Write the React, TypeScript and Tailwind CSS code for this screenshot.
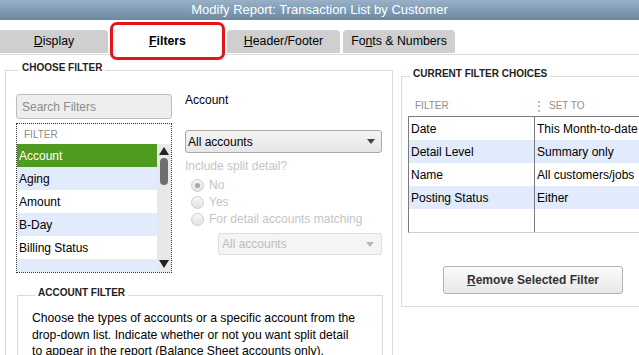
import React from 'react';

const filters = ['Account', 'Aging', 'Amount', 'B-Day', 'Billing Status'];

const choices = [
  { name: 'Date', value: 'This Month-to-date' },
  { name: 'Detail Level', value: 'Summary only' },
  { name: 'Name', value: 'All customers/jobs' },
  { name: 'Posting Status', value: 'Either' },
];

function Caret({ color }: { color: string }) {
  return (
    <svg width="8" height="5" viewBox="0 0 8 5">
      <path d="M0 0h8L4 5z" fill={color} />
    </svg>
  );
}

function Radio({ checked, label }: { checked?: boolean; label: string }) {
  return (
    <div className="flex items-center h-[17px] pl-[6px]">
      <span className="w-[13px] h-[13px] rounded-full border border-[#cdcdcd] bg-linear-to-b from-[#f7f7f7] to-[#e2e2e2] flex items-center justify-center">
        {checked && <span className="w-[5px] h-[5px] rounded-full bg-[#a8a8a8]" />}
      </span>
      <span className="ml-[5px] text-[12px] leading-[15px] text-[#c4c4c4]">{label}</span>
    </div>
  );
}

export default function App() {
  return (
    <div className="w-[639px] h-[355px] overflow-hidden bg-white font-['Liberation_Sans',Arial,sans-serif] text-black">
      {/* Title bar */}
      <div className="h-[20px] bg-linear-to-b from-[#98b1c7] to-[#6b88a2] flex items-center justify-center">
        <span className="text-white text-[13px] leading-[20px] font-['Liberation_Sans_Narrow','Arial_Narrow',sans-serif]">
          Modify Report: Transaction List by Customer
        </span>
      </div>

      {/* Tabs */}
      <div className="flex items-start h-[35px] border-b border-[#dadada] text-[12.3px]">
        <div className="mt-[10px] w-[108px] h-[23px] bg-[#cfcfcf] rounded-tr-[4px] flex items-center justify-center">
          <span><u>D</u>isplay</span>
        </div>
        <div className="relative z-10 ml-[2px] mt-[2px] w-[115px] h-[38px] border-[3px] border-[#e5141b] rounded-[7px] bg-white flex items-center justify-center">
          <span className="font-bold"><u>F</u>ilters</span>
        </div>
        <div className="ml-[2px] mt-[10px] w-[113px] h-[23px] bg-[#cfcfcf] rounded-t-[4px] flex items-center justify-center">
          <span><u>H</u>eader/Footer</span>
        </div>
        <div className="ml-[3px] mt-[10px] w-[112px] h-[23px] bg-[#cfcfcf] rounded-t-[4px] flex items-center justify-center">
          <span>Fo<u>n</u>ts &amp; Numbers</span>
        </div>
      </div>

      <div className="flex items-start">
        {/* Choose filter */}
        <fieldset className="ml-[5px] mt-[8px] w-[388px] h-[330px] shrink-0 border border-[#dcdcdc] pl-[10px]">
          <legend className="ml-[3px] px-[3px] text-[10px] leading-[10px] pb-[5px] font-bold text-[#222]">CHOOSE FILTER</legend>
          <div className="flex mt-[16px]">
            <div className="w-[156px]">
              <div className="h-[25px] rounded-[3px] border border-[#bdbdbd] bg-[#eeeeee] flex items-center pl-[5px] text-[12px] text-[#8c8c8c]">
                Search Filters
              </div>
              <div className="mt-[4px] h-[150px] border border-dotted border-[#333] overflow-hidden">
                <div className="h-[20px] flex items-center pl-[7px] text-[10px] text-[#8e8e8e]">FILTER</div>
                <div className="flex">
                  <div className="flex-1">
                    {filters.map((f, i) => (
                      <div
                        key={f}
                        className={`h-[23px] flex items-center pl-[2px] text-[12px] ${
                          i === 0 ? 'bg-[#4f9a1f] text-white' : i % 2 === 1 ? 'bg-[#e1ebfb]' : 'bg-white'
                        }`}
                      >
                        {f}
                      </div>
                    ))}
                    <div className="h-[23px] bg-[#e1ebfb]" />
                  </div>
                  <div className="w-[14px] h-[128px] bg-[#e8e8e8] flex flex-col items-center">
                    <svg width="10" height="8" viewBox="0 0 10 8" className="mt-[3px]">
                      <path d="M0 8L5 0L10 8z" fill="#222" />
                    </svg>
                    <div className="mt-[3px] w-[8px] h-[27px] rounded-[4px] bg-[#6f6f6f]" />
                    <div className="flex-1" />
                    <svg width="10" height="8" viewBox="0 0 10 8" className="mb-[4px]">
                      <path d="M0 0L5 8L10 0z" fill="#222" />
                    </svg>
                  </div>
                </div>
              </div>
            </div>

            <div className="ml-[13px] w-[197px]">
              <div className="text-[12px] leading-[15px] -mt-[1px]">Account</div>
              <div className="mt-[22px] h-[23px] rounded-[3px] border border-[#a9a9a9] bg-linear-to-b from-[#f4f4f4] to-[#e6e6e6] flex items-center justify-between pl-[2px] pr-[6px] text-[12px]">
                <span>All accounts</span>
                <Caret color="#444" />
              </div>
              <div className="mt-[6px] text-[12px] leading-[15px] text-[#c4c4c4]">Include split detail?</div>
              <div className="mt-[3px]">
                <Radio checked label="No" />
                <Radio label="Yes" />
                <Radio label="For detail accounts matching" />
              </div>
              <div className="mt-[5px] ml-[33px] h-[22px] rounded-[3px] border border-[#dedede] bg-[#f5f5f5] flex items-center justify-between pl-[3px] pr-[7px] text-[12px] text-[#bcbcbc]">
                <span>All accounts</span>
                <Caret color="#b8b8b8" />
              </div>
            </div>
          </div>

          {/* Account filter */}
          <fieldset className="mt-[15px] ml-[1px] w-[366px] h-[90px] border border-[#dcdcdc] pl-[14px]">
            <legend className="ml-[3px] px-[3px] text-[10px] leading-[10px] pb-[5px] font-bold text-[#222]">ACCOUNT FILTER</legend>
            <p className="mt-[7px] text-[12.2px] leading-[16.5px] w-[328px]">
              Choose the types of accounts or a specific account from the drop-down list. Indicate whether or not you want split detail to appear in the report (Balance Sheet accounts only).
            </p>
          </fieldset>
        </fieldset>

        {/* Current filter choices */}
        <fieldset className="ml-[8px] mt-[14px] w-[260px] h-[238px] shrink-0 border border-[#dcdcdc] pl-[6px]">
          <legend className="ml-[2px] px-[3px] text-[10px] leading-[10px] pb-[5px] font-bold text-[#222]">CURRENT FILTER CHOICES</legend>
          <div className="mt-[11px] h-[21px] flex items-center text-[10px] text-[#8e8e8e]">
            <span className="pl-[7px] w-[125px]">FILTER</span>
            <span className="text-[12px] leading-[12px] text-[#999]">⋮</span>
            <span className="ml-[4px]">SET TO</span>
          </div>
          <div className="border-t border-l border-b border-t-[#7a7a7a] border-l-[#7a7a7a] border-b-[#cfcfcf] text-[12px]">
            {choices.map((c, i) => (
              <div key={c.name} className={`flex h-[23px] ${i % 2 === 1 ? 'bg-[#e1ebfb]' : 'bg-white'}`}>
                <div className="w-[126px] pl-[2px] flex items-center border-r border-[#7a7a7a]">{c.name}</div>
                <div className="pl-[2px] flex items-center whitespace-nowrap">{c.value}</div>
              </div>
            ))}
            <div className="flex h-[23px]">
              <div className="w-[126px] border-r border-[#7a7a7a]" />
            </div>
          </div>
          <button className="mt-[33px] ml-[35px] w-[180px] h-[28px] rounded-[3px] border border-[#b3b3b3] bg-linear-to-b from-[#fbfbfb] to-[#e8e8e8] text-[12px] font-bold text-[#333]">
            <u>R</u>emove Selected Filter
          </button>
        </fieldset>
      </div>
    </div>
  );
}
